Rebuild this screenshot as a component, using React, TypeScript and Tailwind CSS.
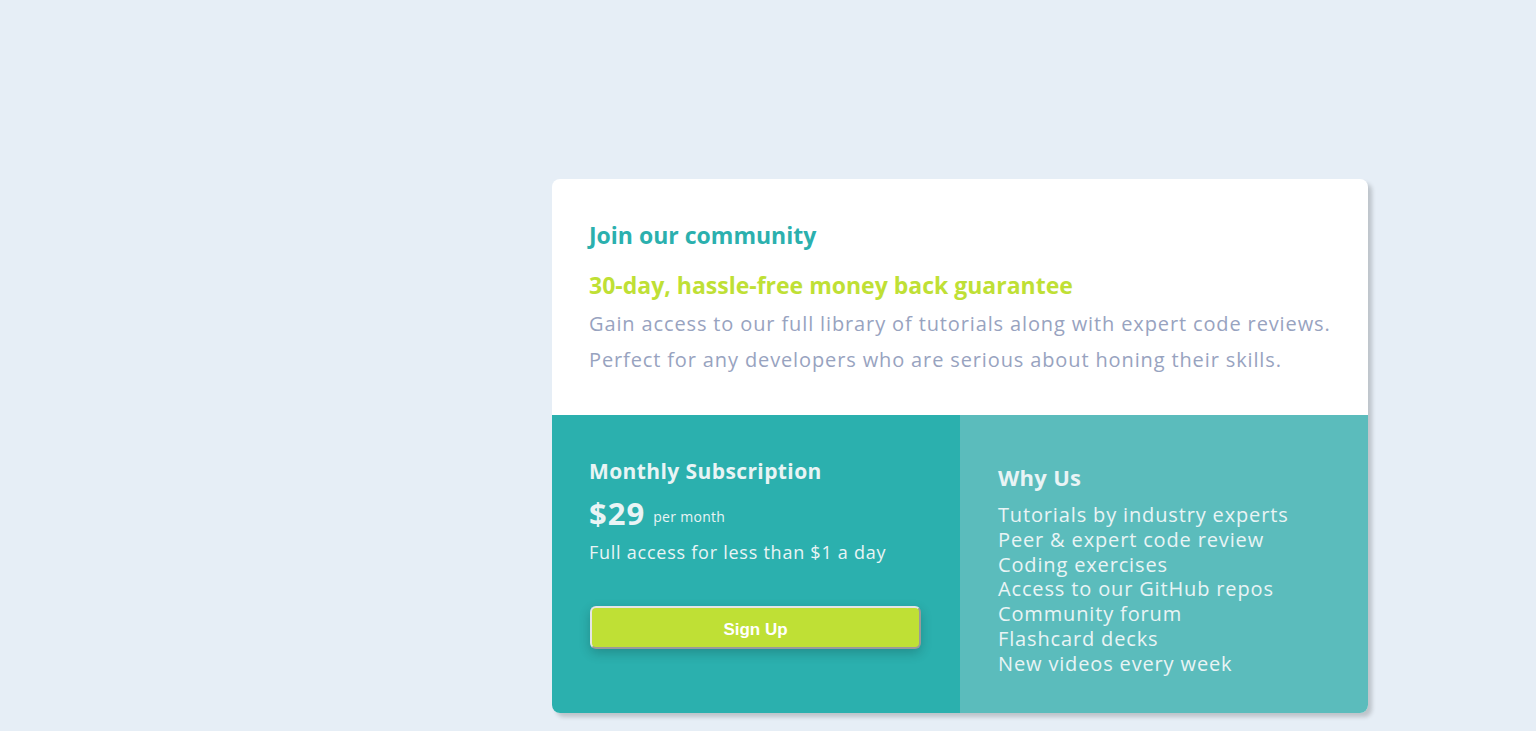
import React from 'react';

const features = [
  'Tutorials by industry experts',
  'Peer & expert code review',
  'Coding exercises',
  'Access to our GitHub repos',
  'Community forum',
  'Flashcard decks',
  'New videos every week',
];

export default function App() {
  return (
    <div className="min-h-screen bg-[#e6eef6] pl-[552px] pt-[179px] pb-[18px] font-['Open_Sans',sans-serif]">
      <div className="w-[816px] overflow-hidden rounded-lg bg-white shadow-[4px_4px_4px_rgba(0,0,0,0.18)]">
        <div className="h-[236px] px-[37px] pt-[40px]">
          <h1 className="text-[23px] leading-[32px] font-bold text-[#2bb0ae]">Join our community</h1>
          <h2 className="mt-[19px] text-[23px] leading-[30px] font-bold text-[#bfe035]">
            30-day, hassle-free money back guarantee
          </h2>
          <p className="mt-[6px] text-[20px] leading-[36px] tracking-[0.87px] text-[#98a3bf]">
            Gain access to our full library of tutorials along with expert code reviews.
            <br />
            Perfect for any developers who are serious about honing their skills.
          </p>
        </div>

        <div className="grid h-[298px] grid-cols-2">
          <div className="bg-[#2bb0ae] px-[37px] pt-[42px] text-[#e9f4f5]">
            <h3 className="text-[21px] leading-[28px] font-bold tracking-[0.4px]">Monthly Subscription</h3>
            <div className="mt-[11px] flex items-center gap-[8px]">
              <span className="text-[31px] leading-[34px] font-bold tracking-[1px]">$29</span>
              <span className="mt-[6px] text-[14px] tracking-[0.3px]">per month</span>
            </div>
            <p className="mt-[9px] text-[18px] leading-[26px] tracking-[0.75px]">Full access for less than $1 a day</p>
            <button className="mt-[41px] ml-[1px] h-[43px] w-[331px] rounded-[6px] border-2 border-t-[#e5e5e5] border-l-[#e5e5e5] border-r-[#9a9a9a] border-b-[#9a9a9a] bg-[#bfe035] pt-[4px] font-['Liberation_Sans',sans-serif] text-[17px] font-bold text-white shadow-[0_4px_12px_rgba(0,0,0,0.2)]">
              Sign Up
            </button>
          </div>

          <div className="bg-[#5bbcbc] px-[38px] pt-[48px] text-[#e9f4f5]">
            <h3 className="text-[22px] leading-[28px] font-bold tracking-[0.3px]">Why Us</h3>
            <ul className="mt-[12px] text-[20px] leading-[24.8px] tracking-[0.85px]">
              {features.map((f) => (
                <li key={f}>{f}</li>
              ))}
            </ul>
          </div>
        </div>
      </div>
    </div>
  );
}
